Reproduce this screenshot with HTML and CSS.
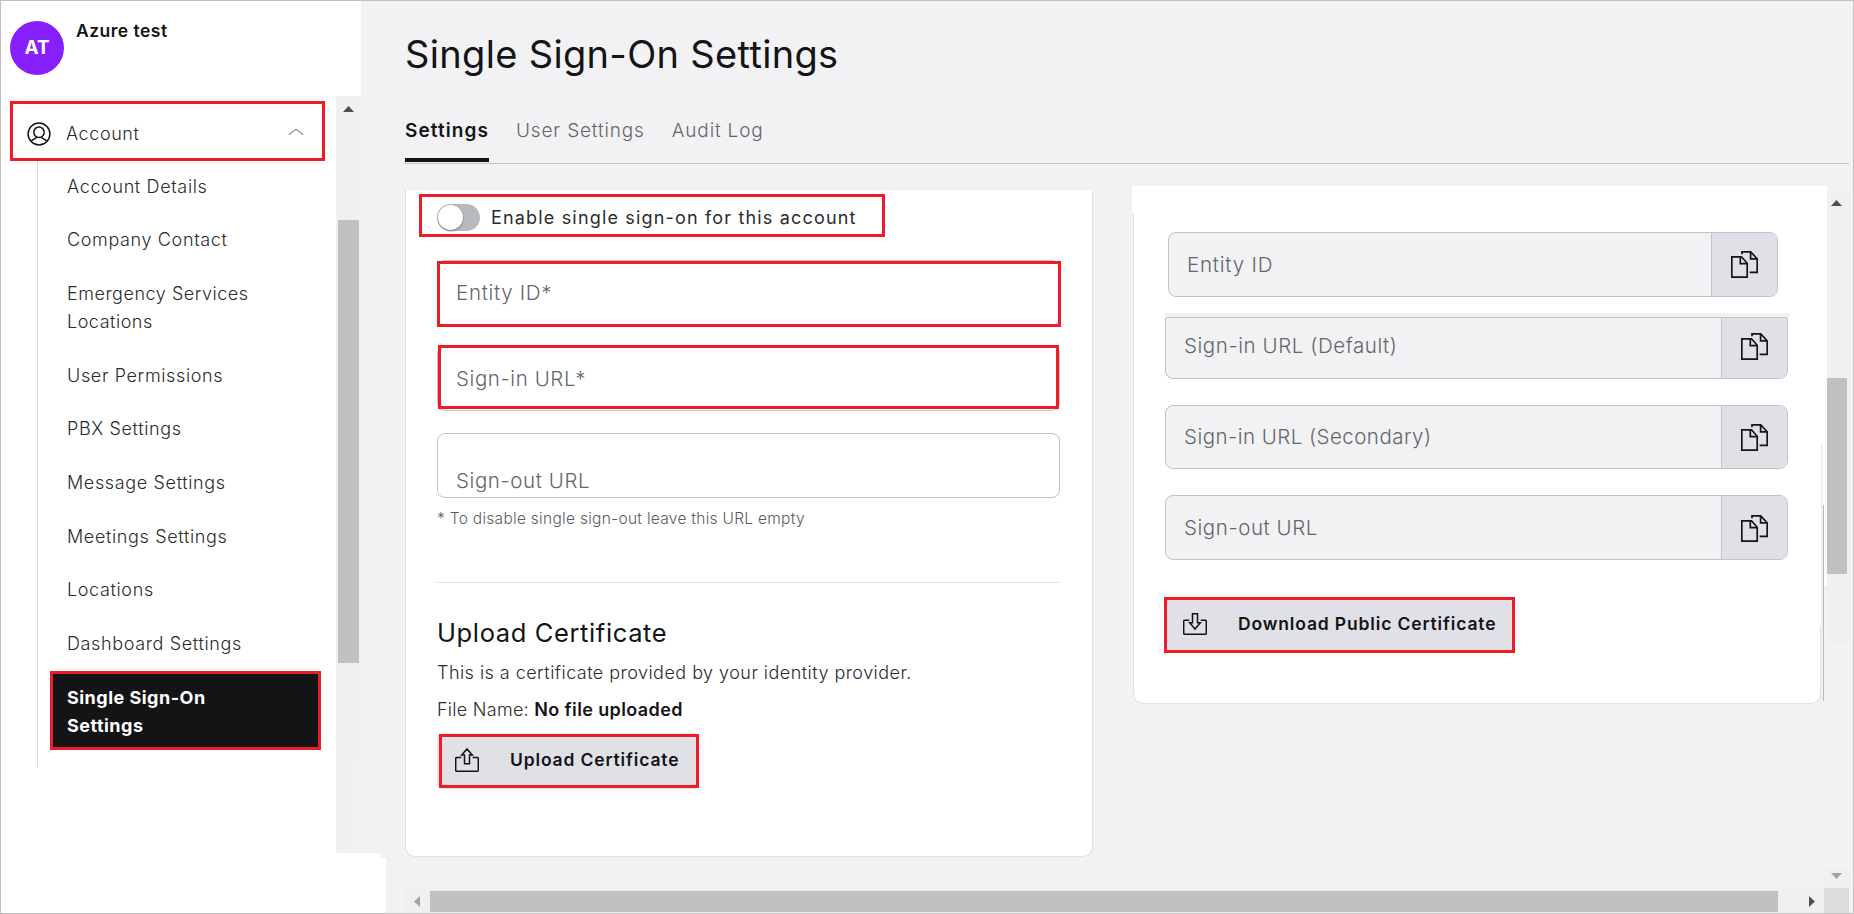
FILE: index.html
```html
<!DOCTYPE html>
<html lang="en">
<head>
<meta charset="utf-8">
<title>Single Sign-On Settings</title>
<link rel="stylesheet" href="styles.css">
</head>
<body>
<svg class="defs" aria-hidden="true">
  <symbol id="copy" viewBox="0 0 27 27"><path d="M.8 5.8h9.7l5.7 6.4v14H.8zM9.3 5.8v6.8h6.9M11 3.2V.8h8.700l6.500 7.100v13.500h-7.600M19.600.8v7.100h6.600"/></symbol>
</svg>
<div class="app">
  <aside class="sidebar">
    <header class="profile">
      <div class="avatar">AT</div>
      <div class="profile-name">Azure test</div>
    </header>
    <div class="side-body">
      <nav class="nav">
        <div class="nav-account marked">
          <svg class="i-account" viewBox="0 0 24 24"><circle cx="12" cy="12" r="10.9"/><circle cx="12" cy="10.3" r="5.2"/><path d="M9.500 15c0 2-3.500 1.600-5 4M14.500 15c0 2 3.500 1.600 5 4"/></svg>
          <span class="nav-label">Account</span>
          <svg class="i-chevron" viewBox="0 0 16 8"><path d="M.7 6.800 8 1.200l7.300 5.600"/></svg>
        </div>
        <ul class="subnav">
          <li>Account Details</li>
          <li>Company Contact</li>
          <li class="snug">Emergency Services<br>Locations</li>
          <li>User Permissions</li>
          <li>PBX Settings</li>
          <li>Message Settings</li>
          <li>Meetings Settings</li>
          <li>Locations</li>
          <li>Dashboard Settings</li>
          <li class="current marked">Single Sign-On<br>Settings</li>
        </ul>
      </nav>
      <div class="side-scroll">
        <div class="side-track"><i class="arrow up"></i><div class="side-thumb"></div></div>
        <div class="side-tail"></div>
      </div>
    </div>
    <div class="side-step"></div>
    <div class="side-foot"></div>
  </aside>
  <main class="main">
    <h1 class="title">Single Sign-On Settings</h1>
    <div class="tabs">
      <a class="tab active">Settings</a>
      <a class="tab">User Settings</a>
      <a class="tab">Audit Log</a>
    </div>
    <div class="content">
      <section class="card">
        <div class="enable marked"><span class="toggle"></span><span class="enable-label">Enable single sign-on for this account</span></div>
        <div class="form">
          <div class="field f-entity">Entity ID*<div class="mark"></div></div>
          <div class="field f-signin">Sign-in URL*<div class="mark"></div></div>
          <div class="field f-signout">Sign-out URL</div>
          <p class="hint">* To disable single sign-out leave this URL empty</p>
          <div class="rule"></div>
          <h2 class="subtitle">Upload Certificate</h2>
          <p class="text">This is a certificate provided by your identity provider.</p>
          <p class="text file"><span>File Name: </span><b>No file uploaded</b></p>
          <button class="btn upload">
            <svg class="i-btn" viewBox="0 0 24 24"><path d="M6.300 9.600H1.700Q.7 9.600.7 10.600v11.700q0 1 1 1h20.600q1 0 1-1V10.600q0-1-1-1h-4.600M9.500 15.800V7H6.700L12 .9 17.300 7h-2.800v8.800z"/></svg>
            <span>Upload Certificate</span><div class="mark"></div>
          </button>
        </div>
      </section>
      <section class="details">
        <div class="details-cap"></div>
        <div class="details-row">
          <div class="panel">
            <div class="panel-top">
              <div class="copy c1"><span class="copy-text">Entity ID</span><span class="copy-btn"><svg><use href="#copy"/></svg></span></div>
              <div class="seam"></div>
              <div class="copy c2"><span class="copy-text">Sign-in URL (Default)</span><span class="copy-btn"><svg><use href="#copy"/></svg></span></div>
              <div class="copy c3"><span class="copy-text">Sign-in URL (Secondary)</span><span class="copy-btn"><svg><use href="#copy"/></svg></span></div>
              <div class="copy c4"><span class="copy-text">Sign-out URL</span><span class="copy-btn"><svg><use href="#copy"/></svg></span></div>
              <button class="btn download marked">
                <svg class="i-btn" viewBox="0 0 24 22"><path d="M6.300 7.200H1.700Q.7 7.200.7 8.200v12.100q0 1 1 1h20.600q1 0 1-1V8.200q0-1-1-1h-4.600M9.500.700v9.100H6.700L12 16l5.300-6.200h-2.800V.7z"/></svg>
                <span>Download Public Certificate</span>
              </button>
            </div>
            <div class="panel-bottom"></div>
          </div>
          <div class="edge"><div class="edge-light"></div><div class="edge-dark"></div></div>
          <div class="edge-white"></div>
        </div>
      </section>
      <div class="rail">
        <div class="rail-track"><i class="arrow up"></i><div class="rail-thumb"></div></div>
        <div class="rail-end"><i class="arrow down"></i></div>
      </div>
    </div>
    <div class="hscroll">
      <div class="htrack"><i class="arrow left"></i><div class="hthumb"></div><i class="arrow right"></i></div>
      <div class="corner"></div>
    </div>
  </main>
</div>
</body>
</html>
```
FILE: styles.css
```css
* { box-sizing: border-box; margin: 0; padding: 0; }
body { width: 1854px; height: 914px; overflow: hidden; font-family: Inter, "Liberation Sans", sans-serif; font-weight: 300; color: #2b2c2e; }
.defs { position: absolute; width: 0; height: 0; }
svg { fill: none; stroke: #131416; stroke-width: 1.5; display: block; flex: none; }
ul { list-style: none; }
span, b, li { white-space: nowrap; }
.app { display: grid; grid-template-columns: 360px 1fr; width: 1854px; height: 914px; border: 1px solid #c1c1c1; background: #f2f2f5; }
.marked { border: 3px solid #ee1c24; }
.mark { position: absolute; border: 3px solid #ee1c24; }

/* Sidebar */
.profile { display: flex; height: 95px; background: #fff; padding-left: 9px; }
.avatar { width: 54px; height: 54px; margin-top: 20px; border-radius: 50%; background: #881fff; color: #fff; font-size: 19px; line-height: 54px; font-weight: 700; text-align: center; }
.profile-name { margin: 18px 0 0 12px; font-size: 17.5px; line-height: 24px; font-weight: 600; letter-spacing: .48px; color: #131416; }
.side-body { display: flex; height: 757px; }
.nav { width: 335px; background: linear-gradient(#f6f6f7, #fff) 23px 0 / 310px 4px no-repeat #fff; padding-top: 5px; }
.nav-account { display: flex; align-items: center; width: 315px; height: 60px; margin-left: 9px; padding: 6px 18px 0 14px; background: #fff; }
.i-account { width: 24px; height: 24px; }
.nav-label { margin-left: 15px; font-size: 18px; line-height: 24px; letter-spacing: .58px; }
.i-chevron { width: 16px; height: 8px; margin: -4px 0 0 auto; stroke: #9b9ca3; stroke-width: 1.3; }
.subnav { display: flex; flex-direction: column; gap: 25.7px; height: 606px; margin-left: 36px; padding: 11.5px 0 0 29px; border-left: 1px solid #dcdcde; font-size: 18px; line-height: 28px; letter-spacing: .64px; }
.snug { letter-spacing: .52px; }
.current { width: 271px; height: 79px; flex: none; margin: -13px 0 0 -17px; padding: 10px 0 0 14px; background: #131416; color: #fff; font-weight: 700; letter-spacing: .48px; }
.side-scroll { width: 25px; }
.side-track { height: 662px; padding-top: 10px; background: #f0f0f0; }
.side-thumb { width: 21px; height: 443px; margin: 108px 0 0 2px; background: #c1c1c1; }
.side-tail { width: 13px; height: 95px; margin-left: 1px; background: #f0f0f0; }
.side-step { width: 379px; height: 5px; background: #fff; }
.side-foot { width: 385px; height: 55px; background: #fff; }
.arrow { display: block; width: 11px; height: 6px; background: #505050; }
.arrow.up { margin-left: 7px; clip-path: polygon(50% 0, 100% 100%, 0 100%); }
.arrow.down { margin-left: 7px; background: #a3a3a3; clip-path: polygon(0 0, 100% 0, 50% 100%); }
.arrow.left { width: 6px; height: 11px; background: #a3a3a3; clip-path: polygon(0 50%, 100% 0, 100% 100%); }
.arrow.right { width: 6px; height: 11px; clip-path: polygon(0 0, 100% 50%, 0 100%); }

/* Main */
.main { padding: 29px 0 0 44px; }
.title { font-size: 38px; line-height: 48px; font-weight: 400; letter-spacing: .33px; color: #131416; }
.tabs { display: flex; gap: 27px; width: 1444px; margin-top: 41px; padding-bottom: 1px; border-bottom: 1px solid #c1c2c8; font-size: 19px; line-height: 24px; letter-spacing: .84px; color: #65666a; }
.tab { padding-bottom: 15px; border-bottom: 4px solid transparent; }
.tab.active { width: 84px; border-color: #131416; color: #131416; font-weight: 600; letter-spacing: 1.08px; }
.content { display: flex; height: 724px; }
.card { width: 688px; height: 667px; margin: 26px 39px 0 0; padding-top: 4px; border: 1px solid #e0e1e6; border-top: 0; border-radius: 0 0 10px 10px; background: #fff; }
.enable { display: flex; gap: 11px; width: 466px; height: 43px; margin-left: 13px; padding: 7px 0 0 15px; font-size: 18px; line-height: 26px; font-weight: 400; letter-spacing: 1.17px; }
.enable-label { padding-top: 1px; }
.toggle { width: 43px; height: 27px; padding: 1px; border-radius: 14px; background: #b6babd; }
.toggle::before { content: ""; display: block; width: 25px; height: 25px; border-radius: 50%; background: #fff; box-shadow: 0 1px 2px #0006; }
.form { padding: 23px 0 0 31px; }
.field { position: relative; width: 623px; height: 66px; padding-left: 18px; border: 1px solid #c1c2ca; border-radius: 8px; font-size: 20.5px; line-height: 24px; letter-spacing: .58px; color: #65666a; }
.f-entity { padding-top: 19.5px; letter-spacing: .7px; }
.f-entity .mark { left: -1px; top: 0; width: 624px; height: 66px; }
.f-signin { margin-top: 19px; padding-top: 20.5px; }
.f-signin .mark { left: 0; top: -1px; width: 621px; height: 64px; }
.f-signout { height: 65px; margin-top: 22px; padding-top: 34.5px; }
.hint { margin-top: 11px; font-size: 15.5px; line-height: 20px; letter-spacing: .29px; color: #5c5d61; }
.rule { width: 623px; height: 1px; margin-top: 53px; background: #e0e1e4; }
.subtitle { margin-top: 33.7px; font-size: 25.5px; line-height: 32px; font-weight: 400; letter-spacing: .62px; color: #131416; }
.text { margin-top: 12.5px; font-size: 18px; line-height: 24px; letter-spacing: .46px; }
.file { display: flex; margin-top: 13px; letter-spacing: .27px; }
.file span { white-space: pre; }
.file b { font-weight: 600; letter-spacing: .38px; color: #131416; }
.btn { display: flex; align-items: flex-start; border-radius: 6px; border-style: none; background: #e0e1e6; font: 600 17.5px/24px Inter, sans-serif; letter-spacing: .85px; color: #131416; text-align: left; }
.upload { position: relative; width: 262px; height: 56px; margin-top: 11px; padding: 14.5px 0 0 18px; gap: 31px; }
.upload .mark { left: 2px; top: 1px; width: 260px; height: 54px; }
.i-btn { width: 24px; }
.upload .i-btn { height: 24px; }
.download { position: relative; width: 351px; height: 56px; margin: 37px 0 0 30px; padding: 11.6px 0 0 16px; gap: 31px; border: 3px solid #ee1c24; border-radius: 0; }
.download .i-btn { height: 22px; margin-top: 1.4px; }

/* Service provider details */
.details { width: 695px; margin-top: 22px; }
.details-cap { height: 28px; background: #fff; }
.details-row { display: flex; padding-left: 1px; }
.panel-top { width: 688px; height: 412px; padding-top: 18px; border-left: 1px solid #e0e1e6; background: #fff; }
.panel-bottom { height: 78px; border: 1px solid #e0e1e6; border-top: 0; border-radius: 0 0 10px 10px; background: #fff; }
.copy { display: flex; width: 623px; height: 65px; margin-left: 31px; border: 1px solid #c1c2ca; border-radius: 8px; overflow: hidden; background: #f2f2f5; font-size: 20.5px; line-height: 24px; letter-spacing: .56px; color: #65666a; }
.copy-text { flex: 1; padding: 19.5px 0 0 18px; }
.copy-btn { width: 66px; padding: 18px 0 0 19px; border-left: 1px solid #c1c2ca; background: #e0e1e6; }
.copy-btn svg { width: 27px; height: 27px; stroke-width: 1.7; }
.c1 { width: 610px; margin-left: 34px; letter-spacing: .8px; }
.seam { width: 625px; height: 4px; margin: 16px 0 0 31px; background: #f2f2f5; }
.c2 { height: 62px; border-radius: 2px 2px 8px 8px; }
.c2 .copy-text { padding-top: 15.5px; }
.c2 .copy-btn { padding-top: 15px; }
.c3 { height: 64px; margin-top: 26px; letter-spacing: .46px; }
.c3 .copy-text { padding-top: 18.5px; }
.c4 { margin-top: 26px; }
.c4 .copy-btn { padding-top: 19px; }
.edge { display: flex; width: 3px; padding-top: 230px; background: linear-gradient(#fff 0 372px, transparent 372px); }
.edge-light { width: 2px; height: 270px; background: #f0f0f0; }
.edge-dark { width: 1px; height: 196px; margin-top: 61px; background: #b9b9bb; }
.edge-white { width: 3px; height: 372px; background: #fff; }
.rail { display: flex; flex-direction: column; width: 22px; padding-top: 26px; }
.rail-track { height: 454px; padding-top: 10px; background: #f0f0f0; }
.rail .arrow { margin-left: 4px; }
.rail-thumb { width: 20px; height: 196px; margin-top: 172px; background: #c1c1c1; }
.rail-end { width: 25px; height: 20px; margin: auto 0 0 -3px; padding-top: 5px; background: #f0f0f0; }
.rail .rail-end .arrow { margin-left: 7px; }
.hscroll { display: flex; height: 25px; }
.htrack { display: flex; align-items: flex-start; width: 1419px; padding: 8px 0 0 9px; background: #f0f0f0; }
.hthumb { width: 1348px; height: 21px; margin: -5px 31px 0 10px; background: #c1c1c1; }
.corner { width: 25px; background: #dcdcdc; }
```
